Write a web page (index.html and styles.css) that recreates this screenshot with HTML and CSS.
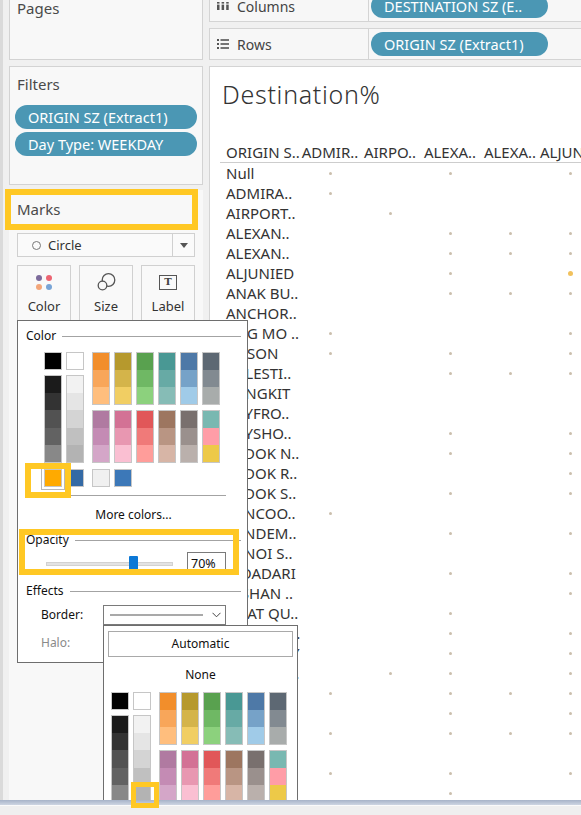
FILE: index.html
```html
<!DOCTYPE html>
<html lang="en">
<head>
<meta charset="utf-8">
<title>Destination%</title>
<link rel="stylesheet" href="styles.css">
</head>
<body>
<div class="app">
  <aside class="sidebar">
    <section class="card pages"><h3 class="card-title">Pages</h3></section>
    <section class="card filters">
      <h3 class="card-title">Filters</h3>
      <div class="pill-list">
        <span class="pill">ORIGIN SZ (Extract1)</span>
        <span class="pill">Day Type: WEEKDAY</span>
      </div>
    </section>
    <section class="marks">
      <h3 class="card-title">Marks</h3>
      <div class="mark-type">
        <span class="circle-ico"></span>
        <span class="mark-type-text">Circle</span>
        <span class="mark-type-arrow"><i></i></span>
      </div>
      <div class="mark-buttons">
        <div class="mark-btn">
          <div class="mark-ico"><span class="color-dots"><i class="d1"></i><i class="d2"></i><i class="d3"></i><i class="d4"></i></span></div>
          <span class="mark-label">Color</span>
        </div>
        <div class="mark-btn">
          <div class="mark-ico">
            <svg width="20" height="20" viewBox="0 0 20 20"><circle cx="12.5" cy="8" r="6.3" fill="none" stroke="#555" stroke-width="1.3"/><circle cx="6.5" cy="13.5" r="4.3" fill="#f9f9f9" stroke="#555" stroke-width="1.3"/></svg>
          </div>
          <span class="mark-label">Size</span>
        </div>
        <div class="mark-btn">
          <div class="mark-ico"><span class="t-box">T</span></div>
          <span class="mark-label">Label</span>
        </div>
      </div>
    </section>
  </aside>

  <main class="main">
    <div class="shelf">
      <div class="shelf-label">
        <svg class="shelf-ico" width="12" height="8" viewBox="0 0 12 8"><g fill="#555"><rect x="0" y="0" width="2.5" height="1.6"/><rect x="0" y="2.6" width="2.5" height="5.4"/><rect x="4.6" y="0" width="2.5" height="1.6"/><rect x="4.6" y="2.6" width="2.5" height="5.4"/><rect x="9.2" y="0" width="2.5" height="1.6"/><rect x="9.2" y="2.6" width="2.5" height="5.4"/></g></svg>
        <span>Columns</span>
      </div>
      <div class="shelf-pills"><span class="pill shelf-pill">DESTINATION SZ (E..</span></div>
    </div>
    <div class="shelf">
      <div class="shelf-label">
        <svg class="shelf-ico" width="12" height="10" viewBox="0 0 12 10"><g fill="#555"><rect x="0" y="0" width="2" height="2"/><rect x="3.5" y="0.2" width="8.5" height="1.6"/><rect x="0" y="4" width="2" height="2"/><rect x="3.5" y="4.2" width="8.5" height="1.6"/><rect x="0" y="8" width="2" height="2"/><rect x="3.5" y="8.2" width="8.5" height="1.6"/></g></svg>
        <span>Rows</span>
      </div>
      <div class="shelf-pills"><span class="pill shelf-pill">ORIGIN SZ (Extract1)</span></div>
    </div>

    <div class="canvas">
      <h1 class="viz-title">Destination%</h1>
      <div class="table">
        <div class="trow thead">
          <span class="lbl">ORIGIN S..</span><span class="hc">ADMIR..</span><span class="hc">AIRPO..</span><span class="hc">ALEXA..</span><span class="hc">ALEXA..</span><span class="hc">ALJUNIED</span>
        </div>
        <div class="trow"><span class="lbl">Null</span><span class="c"><i class="dot"></i></span><span class="c"></span><span class="c"><i class="dot"></i></span><span class="c"></span><span class="c"><i class="dot"></i></span></div>
        <div class="trow"><span class="lbl">ADMIRA..</span><span class="c"><i class="dot"></i></span><span class="c"></span><span class="c"></span><span class="c"></span><span class="c"></span></div>
        <div class="trow"><span class="lbl">AIRPORT..</span><span class="c"></span><span class="c"><i class="dot"></i></span><span class="c"></span><span class="c"></span><span class="c"></span></div>
        <div class="trow"><span class="lbl">ALEXAN..</span><span class="c"></span><span class="c"></span><span class="c"><i class="dot"></i></span><span class="c"><i class="dot"></i></span><span class="c"><i class="dot"></i></span></div>
        <div class="trow"><span class="lbl">ALEXAN..</span><span class="c"></span><span class="c"></span><span class="c"><i class="dot"></i></span><span class="c"><i class="dot"></i></span><span class="c"><i class="dot"></i></span></div>
        <div class="trow"><span class="lbl">ALJUNIED</span><span class="c"></span><span class="c"></span><span class="c"><i class="dot"></i></span><span class="c"></span><span class="c"><i class="dot big"></i></span></div>
        <div class="trow"><span class="lbl">ANAK BU..</span><span class="c"></span><span class="c"></span><span class="c"><i class="dot"></i></span><span class="c"><i class="dot"></i></span><span class="c"><i class="dot"></i></span></div>
        <div class="trow"><span class="lbl">ANCHOR..</span><span class="c"></span><span class="c"></span><span class="c"></span><span class="c"></span><span class="c"></span></div>
        <div class="trow"><span class="lbl">ANG MO ..</span><span class="c"><i class="dot"></i></span><span class="c"></span><span class="c"></span><span class="c"></span><span class="c"><i class="dot"></i></span></div>
        <div class="trow"><span class="lbl">ANSON</span><span class="c"><i class="dot"></i></span><span class="c"></span><span class="c"><i class="dot"></i></span><span class="c"></span><span class="c"><i class="dot"></i></span></div>
        <div class="trow"><span class="lbl">BALESTI..</span><span class="c"></span><span class="c"></span><span class="c"><i class="dot"></i></span><span class="c"><i class="dot"></i></span><span class="c"><i class="dot"></i></span></div>
        <div class="trow"><span class="lbl">BANGKIT</span><span class="c"></span><span class="c"></span><span class="c"></span><span class="c"></span><span class="c"></span></div>
        <div class="trow"><span class="lbl">BAYFRO..</span><span class="c"></span><span class="c"></span><span class="c"></span><span class="c"></span><span class="c"></span></div>
        <div class="trow"><span class="lbl">BAYSHO..</span><span class="c"></span><span class="c"></span><span class="c"><i class="dot"></i></span><span class="c"></span><span class="c"><i class="dot"></i></span></div>
        <div class="trow"><span class="lbl">BEDOK N..</span><span class="c"></span><span class="c"></span><span class="c"><i class="dot"></i></span><span class="c"></span><span class="c"><i class="dot"></i></span></div>
        <div class="trow"><span class="lbl">BEDOK R..</span><span class="c"></span><span class="c"></span><span class="c"></span><span class="c"></span><span class="c"><i class="dot"></i></span></div>
        <div class="trow"><span class="lbl">BEDOK S..</span><span class="c"></span><span class="c"></span><span class="c"><i class="dot"></i></span><span class="c"></span><span class="c"><i class="dot"></i></span></div>
        <div class="trow"><span class="lbl">BENCOO..</span><span class="c"><i class="dot"></i></span><span class="c"></span><span class="c"></span><span class="c"></span><span class="c"></span></div>
        <div class="trow"><span class="lbl">BENDEM..</span><span class="c"></span><span class="c"></span><span class="c"><i class="dot"></i></span><span class="c"></span><span class="c"><i class="dot"></i></span></div>
        <div class="trow"><span class="lbl">BENOI S..</span><span class="c"></span><span class="c"></span><span class="c"></span><span class="c"></span><span class="c"></span></div>
        <div class="trow"><span class="lbl">BIDADARI</span><span class="c"></span><span class="c"></span><span class="c"><i class="dot"></i></span><span class="c"></span><span class="c"><i class="dot"></i></span></div>
        <div class="trow"><span class="lbl">BISHAN ..</span><span class="c"></span><span class="c"></span><span class="c"></span><span class="c"></span><span class="c"><i class="dot"></i></span></div>
        <div class="trow"><span class="lbl">BOAT QU..</span><span class="c"></span><span class="c"></span><span class="c"><i class="dot"></i></span><span class="c"></span><span class="c"></span></div>
        <div class="trow"><span class="lbl">BOON KE..</span><span class="c"></span><span class="c"></span><span class="c"><i class="dot"></i></span><span class="c"></span><span class="c"><i class="dot"></i></span></div>
        <div class="trow"><span class="lbl">BOON LAY</span><span class="c"></span><span class="c"></span><span class="c"><i class="dot"></i></span><span class="c"></span><span class="c"><i class="dot"></i></span></div>
        <div class="trow"><span class="lbl">BOON TE..</span><span class="c"></span><span class="c"><i class="dot"></i></span><span class="c"><i class="dot"></i></span><span class="c"></span><span class="c"><i class="dot"></i></span></div>
        <div class="trow"><span class="lbl">BOULEV..</span><span class="c"><i class="dot"></i></span><span class="c"></span><span class="c"><i class="dot"></i></span><span class="c"><i class="dot"></i></span><span class="c"><i class="dot"></i></span></div>
        <div class="trow"><span class="lbl">BRADDE..</span><span class="c"></span><span class="c"></span><span class="c"><i class="dot"></i></span><span class="c"></span><span class="c"><i class="dot"></i></span></div>
        <div class="trow"><span class="lbl">BRAS BA..</span><span class="c"><i class="dot"></i></span><span class="c"></span><span class="c"><i class="dot"></i></span><span class="c"><i class="dot"></i></span><span class="c"><i class="dot"></i></span></div>
        <div class="trow"><span class="lbl">BRICKL..</span><span class="c"></span><span class="c"></span><span class="c"></span><span class="c"></span><span class="c"></span></div>
        <div class="trow"><span class="lbl">BUGIS</span><span class="c"><i class="dot"></i></span><span class="c"></span><span class="c"><i class="dot"></i></span><span class="c"></span><span class="c"><i class="dot"></i></span></div>
        <div class="trow"><span class="lbl">BUKIT B..</span><span class="c"></span><span class="c"></span><span class="c"><i class="dot"></i></span><span class="c"></span><span class="c"></span></div>
      </div>
    </div>
  </main>
</div>
<div class="statusbar"></div>

<!-- Color popup -->
<div class="popup color-popup">
  <div class="section-head">Color</div>
  <div class="palette">
    <div class="pcol"><span class="sw sw-black"></span><span class="tall tall-dark"></span></div>
    <div class="pcol gray-last"><span class="sw sw-white"></span><span class="tall tall-light"></span></div>
    <div class="pcol"><span class="blk b-orange"></span><span class="blk b-purple"></span></div>
    <div class="pcol"><span class="blk b-olive"></span><span class="blk b-pink"></span></div>
    <div class="pcol"><span class="blk b-green"></span><span class="blk b-red"></span></div>
    <div class="pcol"><span class="blk b-teal"></span><span class="blk b-brown"></span></div>
    <div class="pcol"><span class="blk b-blue"></span><span class="blk b-taupe"></span></div>
    <div class="pcol"><span class="blk b-slate"></span><span class="blk b-mixed"></span></div>
  </div>
  <div class="recent">
    <span class="sw sw-amber selected"></span>
    <span class="sw sw-navy gray-last"></span>
    <span class="sw sw-pale"></span>
    <span class="sw sw-steel"></span>
  </div>
  <div class="separator"></div>
  <div class="more-colors">More colors...</div>
  <div class="section-head head-opacity">Opacity</div>
  <div class="opacity-row">
    <div class="slider">
      <div class="track"></div>
      <div class="ticks"><i></i><i></i><i></i><i></i><i></i></div>
      <div class="thumb"></div>
    </div>
    <div class="pct">70%</div>
  </div>
  <div class="section-head head-effects">Effects</div>
  <div class="effect-row">
    <span class="effect-label">Border:</span>
    <div class="border-select">
      <span class="line-sample"></span>
      <svg width="9" height="6" viewBox="0 0 9 6"><path d="M0.5 0.8 L4.5 4.8 L8.5 0.8" fill="none" stroke="#444" stroke-width="1"/></svg>
    </div>
  </div>
  <div class="effect-row halo"><span class="effect-label">Halo:</span></div>
</div>

<!-- Border color popup -->
<div class="popup border-popup">
  <div class="auto-btn">Automatic</div>
  <div class="none-opt">None</div>
  <div class="palette">
    <div class="pcol"><span class="sw sw-black"></span><span class="tall tall-dark"></span></div>
    <div class="pcol gray-last"><span class="sw sw-white"></span><span class="tall tall-light"></span></div>
    <div class="pcol"><span class="blk b-orange"></span><span class="blk b-purple"></span></div>
    <div class="pcol"><span class="blk b-olive"></span><span class="blk b-pink"></span></div>
    <div class="pcol"><span class="blk b-green"></span><span class="blk b-red"></span></div>
    <div class="pcol"><span class="blk b-teal"></span><span class="blk b-brown"></span></div>
    <div class="pcol"><span class="blk b-blue"></span><span class="blk b-taupe"></span></div>
    <div class="pcol"><span class="blk b-slate"></span><span class="blk b-mixed"></span></div>
  </div>
</div>

<!-- annotation highlights -->
<div class="hl hl-marks"></div>
<div class="hl hl-swatch"></div>
<div class="hl hl-opacity"></div>
<div class="hl hl-small"></div>
</body>
</html>
```

FILE: styles.css
```css
* { box-sizing: border-box; margin: 0; padding: 0; }
html, body { width: 581px; height: 815px; overflow: hidden; }
body {
  position: relative;
  background: #f0f0f0;
  font-family: "Noto Sans", "DejaVu Sans", sans-serif;
  color: #333;
}

.app {
  display: grid;
  grid-template-columns: 203px 1fr;
  column-gap: 6px;
  height: 800px;
}

/* ---------- sidebar ---------- */
.sidebar {
  display: flex;
  flex-direction: column;
  border-left: 3px solid #dadada;
  padding-left: 6px;
  min-height: 0;
}
.card {
  background: #f8f8f8;
  border: 1px solid #d3d3d3;
}
.card-title {
  font-size: 15px;
  font-weight: 400;
  line-height: 20px;
  color: #4a4a4a;
}
.pages { margin-top: -8px; height: 68px; padding: 5px 7px; }
.filters { margin-top: 6px; height: 119px; padding: 7px 5px 0; }
.filters .card-title { padding-left: 2px; }
.pill-list { margin-top: 11px; display: flex; flex-direction: column; gap: 3px; }
.pill {
  display: block;
  height: 24px;
  border-radius: 12px;
  background: #4b97b4;
  color: #fff;
  font-size: 14.5px;
  line-height: 24px;
  padding-left: 13px;
  white-space: nowrap;
  overflow: hidden;
}

.marks {
  margin-top: 5px;
  flex: 1;
  background: #f8f8f8;
  padding: 9px 8px 0;
}
.mark-type {
  margin-top: 14px;
  height: 24px;
  border: 1px solid #d0d0d0;
  background: #fafafa;
  display: flex;
  align-items: center;
  padding-left: 14px;
  font-size: 13px;
  color: #333;
}
.circle-ico {
  width: 9px; height: 9px;
  border: 1.2px solid #777;
  border-radius: 50%;
  margin-right: 7px;
}
.mark-type-text { flex: 1; }
.mark-type-arrow {
  width: 22px; height: 22px;
  border-left: 1px solid #d0d0d0;
  display: flex; align-items: center; justify-content: center;
}
.mark-type-arrow i {
  width: 0; height: 0;
  border-left: 4px solid transparent;
  border-right: 4px solid transparent;
  border-top: 5px solid #555;
}
.mark-buttons {
  margin-top: 8px;
  display: grid;
  grid-template-columns: repeat(3, 1fr);
  column-gap: 8px;
}
.mark-btn {
  height: 60px;
  border: 1px solid #d0d0d0;
  background: #f9f9f9;
  display: flex;
  flex-direction: column;
  align-items: center;
  padding-top: 7px;
}
.mark-ico { height: 18px; display: flex; align-items: center; justify-content: center; }
.mark-label { margin-top: 7px; font-size: 13px; line-height: 16px; color: #333; }
.color-dots { display: grid; grid-template-columns: 6px 6px; gap: 3px 4px; }
.color-dots i { width: 6px; height: 6px; border-radius: 50%; display: block; }
.color-dots .d1 { background: #7c6b9b; }
.color-dots .d2 { background: #ec6472; }
.color-dots .d3 { background: #f3a67a; }
.color-dots .d4 { background: #78a4d6; }
.t-box {
  width: 18px; height: 15px;
  border: 1.3px solid #555;
  font-family: "DejaVu Serif", "Liberation Serif", serif;
  font-weight: 700;
  font-size: 10px;
  line-height: 12px;
  text-align: center;
  color: #444;
}

/* ---------- main ---------- */
.main {
  display: flex;
  flex-direction: column;
  gap: 6px;
  margin-top: -10px;
  min-width: 0;
}
.shelf {
  height: 32px;
  flex: none;
  display: grid;
  grid-template-columns: 159px 1fr;
  border: 1px solid #d4d4d4;
  border-right: 0;
  background: #f7f7f7;
}
.shelf-label {
  display: flex;
  align-items: center;
  padding-left: 7px;
  border-right: 1px solid #d4d4d4;
  font-size: 14px;
  color: #444;
}
.shelf-ico { margin-right: 8px; flex: none; }
.shelf-pills { display: flex; align-items: center; padding-left: 2px; }
.shelf-pill { width: 177px; }

.canvas {
  flex: 1;
  background: #fff;
  border-left: 1px solid #d4d4d4;
  border-top: 1px solid #d4d4d4;
  overflow: hidden;
}
.viz-title {
  font-size: 25px;
  font-weight: 300;
  line-height: 34px;
  letter-spacing: 0.7px;
  padding: 10px 0 0 12px;
  color: #333;
}
.table { margin: 32px 0 0 10px; width: 380px; }
.trow {
  display: grid;
  grid-template-columns: 80px repeat(5, 60px);
  height: 20px;
  font-size: 15px;
  line-height: 20px;
  color: #333;
}
.thead { height: 20px; line-height: 19px; border-bottom: 1px solid #cdcdcd; }
.lbl { padding-left: 6px; white-space: nowrap; }
.hc { text-align: center; white-space: nowrap; }
.c { display: flex; align-items: center; justify-content: center; }
.dot { display: block; width: 3px; height: 3px; border-radius: 50%; background: #cbbfad; }
.dot.big { width: 5px; height: 5px; background: #f1c15d; }

.statusbar {
  position: relative;
  z-index: 12;
  height: 15px;
  background: linear-gradient(#a7b3c8 0, #cdd5e2 5px, #fafafa 5px, #fafafa 6px, #efefef 6px);
}

/* ---------- popups ---------- */
.popup {
  position: absolute;
  background: #fff;
  border: 1px solid #6e6e6e;
  font-size: 12px;
  color: #111;
}
.color-popup {
  left: 17px; top: 320px;
  width: 231px; height: 343px;
  padding: 7px 6px 0 8px;
  z-index: 10;
}
.section-head {
  display: flex;
  align-items: center;
  height: 16px;
  line-height: 16px;
}
.section-head::after {
  content: "";
  flex: 1;
  height: 1px;
  background: #a3a3a3;
  margin-left: 6px;
}
.palette { display: flex; gap: 4px; margin: 8px 0 0 18px; }
.pcol { display: flex; flex-direction: column; gap: 5px; width: 18px; }
.gray-last { margin-right: 4px; }
.sw { display: block; width: 18px; height: 18px; border: 1px solid #c6c6c6; }
.tall { display: block; width: 18px; height: 88px; border: 1px solid #c6c6c6; }
.blk { display: block; width: 18px; height: 53px; border: 1px solid #c6c6c6; }

.sw-black { background: #000; }
.sw-white { background: #fff; }
.sw-amber { background: #ffaa00; }
.sw-navy { background: #346aa5; }
.sw-pale { background: #f0f0f0; }
.sw-steel { background: #3c78b8; }
.selected { box-shadow: 0 0 0 2px #fff, 0 0 0 3px #b8b8b8; }

.tall-dark { background: linear-gradient(#1b1b1b 0 20%, #333 20% 40%, #525252 40% 60%, #626262 60% 80%, #888 80%); }
.tall-light { background: linear-gradient(#f2f2f2 0 20%, #e5e5e5 20% 40%, #d4d4d4 40% 60%, #c0c0c0 60% 80%, #b3b3b3 80%); }
.b-orange { background: linear-gradient(#f28e2b 0 33.3%, #f8a65a 33.3% 66.6%, #ffbe7d 66.6%); }
.b-olive { background: linear-gradient(#b6992d 0 33.3%, #d4b44a 33.3% 66.6%, #f1ce63 66.6%); }
.b-green { background: linear-gradient(#59a14f 0 33.3%, #6fb864 33.3% 66.6%, #8cd17d 66.6%); }
.b-teal { background: linear-gradient(#499894 0 33.3%, #67aaa5 33.3% 66.6%, #86bcb6 66.6%); }
.b-blue { background: linear-gradient(#4e79a7 0 33.3%, #76a2c8 33.3% 66.6%, #a0cbe8 66.6%); }
.b-slate { background: linear-gradient(#5d6873 0 33.3%, #828a91 33.3% 66.6%, #a8acab 66.6%); }
.b-purple { background: linear-gradient(#b07aa1 0 33.3%, #c48bb4 33.3% 66.6%, #d4a6c8 66.6%); }
.b-pink { background: linear-gradient(#d37295 0 33.3%, #e897b1 33.3% 66.6%, #fabfd2 66.6%); }
.b-red { background: linear-gradient(#e15759 0 33.3%, #f07a79 33.3% 66.6%, #ff9d9a 66.6%); }
.b-brown { background: linear-gradient(#9d7660 0 33.3%, #b99583 33.3% 66.6%, #d7b5a6 66.6%); }
.b-taupe { background: linear-gradient(#79706e 0 33.3%, #9a908d 33.3% 66.6%, #bab0ac 66.6%); }
.b-mixed { background: linear-gradient(#79b8b1 0 33.3%, #ff9da7 33.3% 66.6%, #edc948 66.6%); }

.recent { display: flex; gap: 4px; margin: 6px 0 0 18px; }
.separator { margin-top: 8px; width: 200px; height: 1px; background: #a3a3a3; }
.more-colors { margin-top: 11px; line-height: 16px; text-align: center; }
.head-opacity { margin-top: 9px; }
.opacity-row { display: flex; gap: 14px; margin-top: 4px; height: 23px; padding-left: 20px; }
.slider { position: relative; width: 127px; }
.track { margin-top: 10px; height: 4px; background: #e3e3e3; border: 1px solid #d2d2d2; }
.ticks { display: flex; justify-content: space-between; padding: 0 5px; margin-top: 3px; }
.ticks i { display: block; width: 1px; height: 2px; background: #b9b9b9; }
.thumb {
  position: absolute;
  left: 83px; top: 4px;
  width: 9px; height: 14px;
  background: #0c78d6;
  border-radius: 1px;
}
.pct {
  width: 39px; height: 23px;
  border: 1px solid #7a7a7a;
  padding-left: 3px;
  line-height: 21px;
  font-size: 12.5px;
}
.head-effects { margin-top: 8px; }
.effect-row { display: flex; align-items: center; height: 20px; padding-left: 15px; margin-top: 6px; }
.effect-label { width: 62px; line-height: 16px; }
.border-select {
  width: 123px; height: 20px;
  border: 1px solid #7a7a7a;
  display: flex; align-items: center;
  padding-left: 6px;
}
.line-sample { width: 93px; height: 2px; background: #a9a9a9; margin-right: 9px; }
.halo { margin-top: 10px; height: 16px; color: #8a8a8a; }

.border-popup {
  left: 103px; top: 625px;
  width: 195px; height: 190px;
  padding: 5px 4px 0;
  z-index: 11;
}
.auto-btn {
  height: 26px;
  border: 1px solid #a9a9a9;
  line-height: 24px;
  text-align: center;
}
.none-opt { margin-top: 10px; line-height: 16px; text-align: center; }
.border-popup .palette { margin: 9px 0 0 3px; }

/* ---------- annotation highlights ---------- */
.hl { position: absolute; border: 6px solid #ffc824; z-index: 20; }
.hl-marks { left: 5px; top: 189px; width: 193px; height: 41px; }
.hl-swatch { left: 25px; top: 463px; width: 46px; height: 35px; }
.hl-opacity { left: 19px; top: 529px; width: 220px; height: 46px; }
.hl-small { left: 131px; top: 782px; width: 28px; height: 26px; border-width: 5px; }
```
